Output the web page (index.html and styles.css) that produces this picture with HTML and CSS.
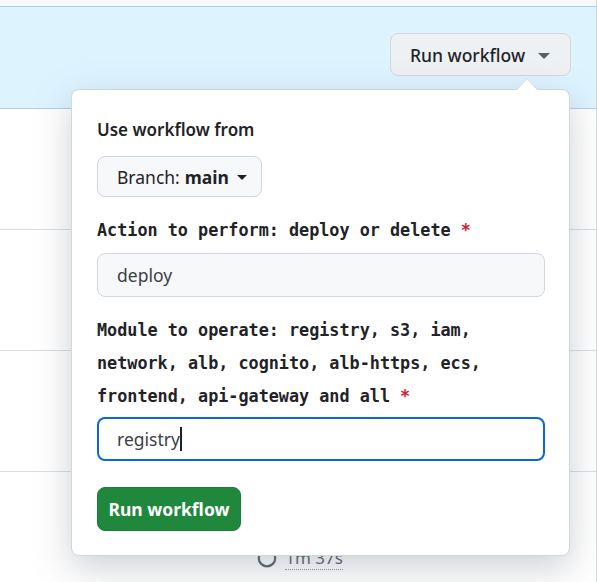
FILE: index.html
```html
<!DOCTYPE html>
<html>
<head>
<meta charset="utf-8">
<link rel="stylesheet" href="styles.css">
</head>
<body>
<div class="page">
  <div class="topbar"></div>
  <div class="banner">
    <button class="btn btn-top">Run workflow <span class="caret"></span></button>
  </div>
  <div class="row"></div>
  <div class="row"></div>
  <div class="row"></div>
  <div class="row row-last">
    <span class="dur"><svg class="clock" width="16" height="16" viewBox="0 0 16 16"><circle cx="8" cy="8" r="6.6" fill="none" stroke="#57606a" stroke-width="1.8"/></svg><span class="dur-text">1m 37s</span></span>
  </div>

  <div class="popover">
    <div class="label-sans">Use workflow from</div>
    <button class="btn btn-branch">Branch: <b>main</b> <span class="caret"></span></button>
    <div class="label-mono">Action to perform: deploy or delete <span class="req">*</span></div>
    <div class="input">deploy</div>
    <div class="label-mono">Module to operate: registry, s3, iam, network, alb, cognito, alb-https, ecs, frontend, api-gateway and all <span class="req">*</span></div>
    <div class="input input-focus">registry<span class="cursor"></span></div>
    <button class="btn btn-green">Run workflow</button>
  </div>
</div>
</body>
</html>
```

FILE: styles.css
```css
* { box-sizing: border-box; }
html, body { margin: 0; padding: 0; background: #ffffff; }
body { font-family: "Noto Sans", "Open Sans", sans-serif; color: #1f2328; }

.page {
  position: relative;
  width: 597px;
  height: 582px;
  overflow: hidden;
  border-right: 1px solid #d0d7de;
}

.topbar {
  height: 7px;
  background: #f6f8fa;
  border-bottom: 1px solid #9fd3f7;
}

.banner {
  height: 102px;
  background: #ddf4ff;
  border-bottom: 1px solid #9fd3f7;
  display: flex;
  justify-content: flex-end;
  align-items: flex-start;
  padding: 26px 25px 0 0;
}

.btn {
  font-family: inherit;
  display: inline-flex;
  align-items: center;
  border: 1px solid #d0d7de;
  border-radius: 8px;
  cursor: pointer;
}

.btn-top {
  height: 43px;
  width: 181px;
  padding: 0 0 0 19px;
  background: #eef1f4;
  color: #1f2328;
  font-size: 17.5px;
  font-weight: 500;
}

.caret {
  display: inline-block;
  width: 0;
  height: 0;
  border-left: 6px solid transparent;
  border-right: 6px solid transparent;
  border-top: 6px solid #57606a;
  margin-left: 13px;
  margin-top: 2px;
}

.row {
  height: 121px;
  border-bottom: 1px solid #d8dee4;
}
.row-last {
  border-bottom: none;
  display: flex;
  justify-content: center;
  padding-top: 51px;
}
.dur {
  display: inline-flex;
  align-items: center;
  gap: 8px;
  color: #57606a;
  font-size: 17px;
  margin-left: 4px;
}
.clock { width: 20px; height: 20px; }
.dur-text { border-bottom: 1px dotted #8c959f; }

.popover {
  position: absolute;
  left: 71px;
  top: 89px;
  width: 499px;
  height: 467px;
  background: #ffffff;
  border: 1px solid #d0d7de;
  border-radius: 8px;
  box-shadow: 0 12px 36px rgba(110, 118, 128, 0.34);
  padding: 26px 25px 0 25px;
  display: flex;
  flex-direction: column;
  align-items: flex-start;
}
.popover::before,
.popover::after {
  content: "";
  position: absolute;
  width: 0;
  height: 0;
  border-left: 11px solid transparent;
  border-right: 11px solid transparent;
}
.popover::before {
  top: -12px;
  left: 444px;
  border-bottom: 12px solid #d0d7de;
}
.popover::after {
  top: -11px;
  left: 444px;
  border-bottom: 12px solid #ffffff;
}

.label-sans {
  font-size: 17px;
  font-weight: 600;
  line-height: 28px;
  height: 28px;
}

.btn-branch {
  margin-top: 12px;
  height: 41px;
  width: 165px;
  padding: 0 0 0 19px;
  background: #f6f8fa;
  color: #1f2328;
  font-size: 17.5px;
  font-weight: 400;
}
.btn-branch b { font-weight: 700; margin-left: 5px; }
.btn-branch .caret { margin-left: 8px; margin-top: 1px; border-top-color: #1f2328; border-left-width: 5.5px; border-right-width: 5.5px; border-top-width: 5.5px; }

.label-mono {
  font-family: "DejaVu Sans Mono", "Liberation Mono", monospace;
  font-weight: 700;
  font-size: 16.8px;
  line-height: 33px;
  color: #1f2328;
  margin-top: 17px;
  width: 390px;
}
.req { color: #cf222e; }

.input {
  margin-top: 6px;
  width: 448px;
  height: 44px;
  border: 1px solid #d0d7de;
  border-radius: 8px;
  background: #f6f8fa;
  padding: 0 0 0 19px;
  display: flex;
  align-items: center;
  font-size: 17.5px;
  color: #3a3f45;
}
.input-focus {
  background: #ffffff;
  border: 2px solid #0969da;
  padding-left: 18px;
  margin-top: 4px;
}
.cursor {
  display: inline-block;
  width: 2px;
  height: 24px;
  background: #1f2328;
  margin-left: 0;
}

.btn-green {
  margin-top: 26px;
  height: 44px;
  width: 144px;
  padding: 0;
  justify-content: center;
  background: #1f883d;
  border-color: #1a7f37;
  color: #ffffff;
  font-size: 17.5px;
  font-weight: 700;
}
```
